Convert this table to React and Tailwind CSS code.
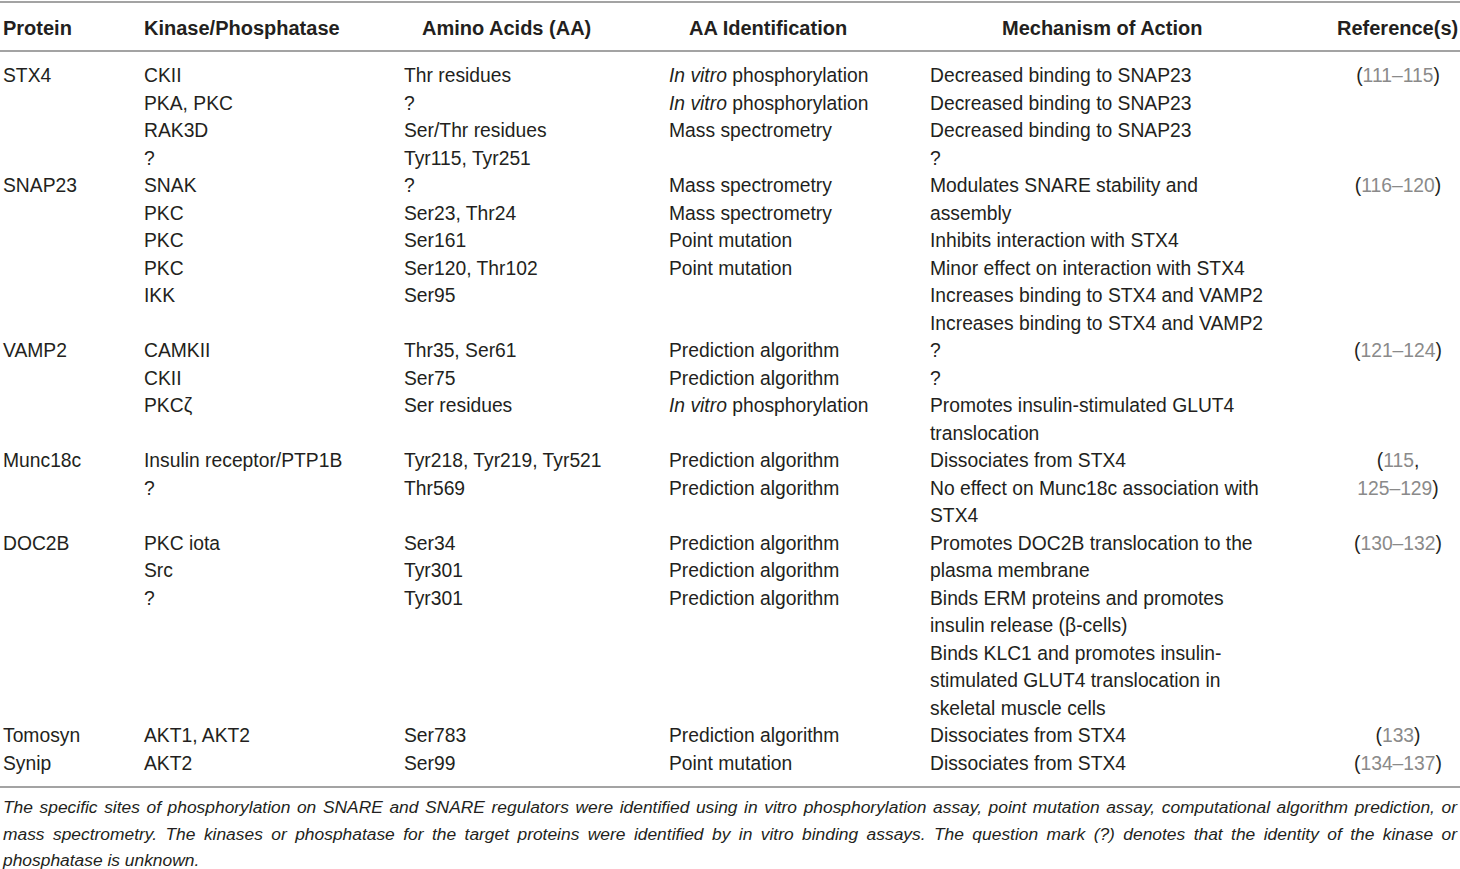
import React from "react";

const I = ({ children }) => <span className="italic">{children}</span>;
const Ref = ({ children }) => <span className="text-[#8a8a8a]">{children}</span>;

const groups = [
  {
    protein: "STX4",
    kinase: ["CKII", "PKA, PKC", "RAK3D", "?"],
    aa: ["Thr residues", "?", "Ser/Thr residues", "Tyr115, Tyr251"],
    ident: [
      <><I>In vitro</I> phosphorylation</>,
      <><I>In vitro</I> phosphorylation</>,
      "Mass spectrometry",
    ],
    mech: [
      "Decreased binding to SNAP23",
      "Decreased binding to SNAP23",
      "Decreased binding to SNAP23",
      "?",
    ],
    ref: [<>(<Ref>111–115</Ref>)</>],
  },
  {
    protein: "SNAP23",
    kinase: ["SNAK", "PKC", "PKC", "PKC", "IKK"],
    aa: ["?", "Ser23, Thr24", "Ser161", "Ser120, Thr102", "Ser95"],
    ident: ["Mass spectrometry", "Mass spectrometry", "Point mutation", "Point mutation"],
    mech: [
      "Modulates SNARE stability and",
      "assembly",
      "Inhibits interaction with STX4",
      "Minor effect on interaction with STX4",
      "Increases binding to STX4 and VAMP2",
      "Increases binding to STX4 and VAMP2",
    ],
    ref: [<>(<Ref>116–120</Ref>)</>],
  },
  {
    protein: "VAMP2",
    kinase: ["CAMKII", "CKII", "PKCζ"],
    aa: ["Thr35, Ser61", "Ser75", "Ser residues"],
    ident: [
      "Prediction algorithm",
      "Prediction algorithm",
      <><I>In vitro</I> phosphorylation</>,
    ],
    mech: ["?", "?", "Promotes insulin-stimulated GLUT4", "translocation"],
    ref: [<>(<Ref>121–124</Ref>)</>],
  },
  {
    protein: "Munc18c",
    kinase: ["Insulin receptor/PTP1B", "?"],
    aa: ["Tyr218, Tyr219, Tyr521", "Thr569"],
    ident: ["Prediction algorithm", "Prediction algorithm"],
    mech: ["Dissociates from STX4", "No effect on Munc18c association with", "STX4"],
    ref: [<>(<Ref>115</Ref>,</>, <><Ref>125–129</Ref>)</>],
  },
  {
    protein: "DOC2B",
    kinase: ["PKC iota", "Src", "?"],
    aa: ["Ser34", "Tyr301", "Tyr301"],
    ident: ["Prediction algorithm", "Prediction algorithm", "Prediction algorithm"],
    mech: [
      "Promotes DOC2B translocation to the",
      "plasma membrane",
      "Binds ERM proteins and promotes",
      "insulin release (β-cells)",
      "Binds KLC1 and promotes insulin-",
      "stimulated GLUT4 translocation in",
      "skeletal muscle cells",
    ],
    ref: [<>(<Ref>130–132</Ref>)</>],
  },
  {
    protein: "Tomosyn",
    kinase: ["AKT1, AKT2"],
    aa: ["Ser783"],
    ident: ["Prediction algorithm"],
    mech: ["Dissociates from STX4"],
    ref: [<>(<Ref>133</Ref>)</>],
  },
  {
    protein: "Synip",
    kinase: ["AKT2"],
    aa: ["Ser99"],
    ident: ["Point mutation"],
    mech: ["Dissociates from STX4"],
    ref: [<>(<Ref>134–137</Ref>)</>],
  },
];

const Lines = ({ items, className = "" }) => (
  <div className={className}>
    {items.map((t, i) => (
      <div key={i} className="whitespace-nowrap">
        {t}
      </div>
    ))}
  </div>
);

const cols = "grid grid-cols-[141px_260px_265px_261px_1fr_120px]";

export default function App() {
  return (
    <div className="w-[1460px] h-[869px] bg-white overflow-hidden font-['Liberation_Sans',Arial,sans-serif] text-[#231f20] pt-[1px]">
      <div className="border-t-2 border-b-2 border-[#a3a3a3]">
        <div className={`${cols} h-[47px] items-center pt-[3px] px-[3px] text-[20px] font-bold`}>
          <div className="whitespace-nowrap">Protein</div>
          <div className="whitespace-nowrap">Kinase/Phosphatase</div>
          <div className="pl-[18px] whitespace-nowrap">Amino Acids (AA)</div>
          <div className="pl-[20px] whitespace-nowrap">AA Identification</div>
          <div className="pl-[72px] whitespace-nowrap">Mechanism of Action</div>
          <div className="text-right whitespace-nowrap">Reference(s)</div>
        </div>
      </div>
      <div className="border-b-2 border-[#a3a3a3] pt-[10px] pb-[9px] px-[3px] text-[19.3px] leading-[27.5px]">
        {groups.map((g) => (
          <div key={g.protein} className={cols}>
            <Lines items={[g.protein]} />
            <Lines items={g.kinase} />
            <Lines items={g.aa} />
            <Lines items={g.ident} />
            <Lines items={g.mech} />
            <Lines items={g.ref} className="text-center pl-[2px]" />
          </div>
        ))}
      </div>
      <div className="pt-[6px] px-[3px] italic text-[17.4px] leading-[26.5px] text-[#231f20]">
        <div className="text-justify [text-align-last:justify] whitespace-nowrap">
          The specific sites of phosphorylation on SNARE and SNARE regulators were identified using in vitro phosphorylation assay, point mutation assay, computational algorithm prediction, or
        </div>
        <div className="text-justify [text-align-last:justify]">
          mass spectrometry. The kinases or phosphatase for the target proteins were identified by in vitro binding assays. The question mark (?) denotes that the identity of the kinase or
        </div>
        <div className="leading-[20px] mt-[3px]">phosphatase is unknown.</div>
      </div>
    </div>
  );
}
